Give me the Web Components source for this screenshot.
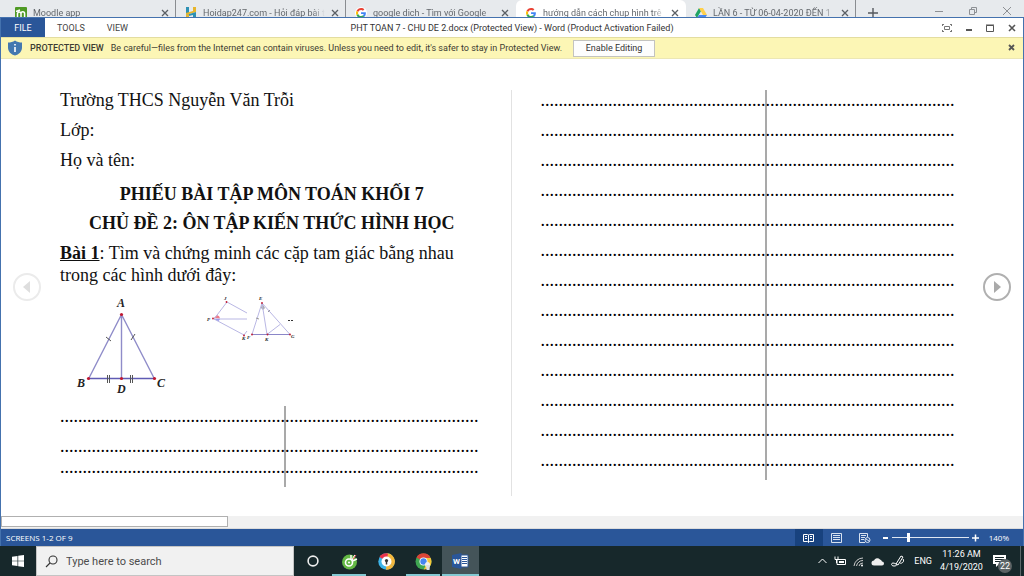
<!DOCTYPE html>
<html lang="en">
<head>
<meta charset="utf-8">
<title>PHT TOAN 7 - CHU DE 2.docx (Protected View) - Word</title>
<style>
  html, body { margin: 0; height: 100%; }
  body { font-family: Roboto, "Open Sans", sans-serif; font-size: 9px; color: #444; background: #fff; }
</style>
</head>
<body>
<desktop-screen></desktop-screen>

<script>
const define = (name, html) => {
  const template = document.createElement('template');
  template.innerHTML = html;
  customElements.define(name, class extends HTMLElement {
    constructor() {
      super();
      this.attachShadow({ mode: 'open' }).append(template.content.cloneNode(true));
    }
    connectedCallback() {
      const dots = this.shadowRoot.querySelectorAll('[data-dots]');
      dots.forEach(p => { p.textContent = '.'.repeat(Number(this.getAttribute('dots') || 92)); });
    }
  });
};

const button = 'button{font:inherit;color:inherit;background:none;border:0;padding:0;margin:0;display:flex;align-items:center;justify-content:center}svg{display:block}';
const cross = '<svg width="8" height="8" viewBox="0 0 8 8" stroke="currentColor" stroke-width="1.3"><path d="M1 1l6 6M7 1L1 7"/></svg>';
const google = '<svg slot="icon" width="12" height="12" viewBox="0 0 48 48"><circle cx="24" cy="24" r="24" fill="#fff"/><g transform="translate(4 4) scale(.84)"><path fill="#EA4335" d="M24 9.5c3.5 0 6.700 1.200 9.200 3.600l6.900-6.900C35.900 2.400 30.500 0 24 0 14.600 0 6.500 5.400 2.600 13.200l8 6.200C12.400 13.700 17.700 9.500 24 9.500z"/><path fill="#4285F4" d="M47 24.500c0-1.600-.2-3.100-.4-4.500H24v9h12.900c-.6 3-2.300 5.500-4.800 7.200l7.700 6C44.400 38 47 31.800 47 24.500z"/><path fill="#FBBC05" d="M10.500 28.600a14 14 0 0 1 0-9.200l-8-6.200a24 24 0 0 0 0 21.600z"/><path fill="#34A853" d="M24 48c6.500 0 11.900-2.100 15.900-5.800l-7.700-6c-2.200 1.500-4.900 2.300-8.200 2.300-6.300 0-11.600-4.200-13.500-9.900l-8 6.200C6.500 42.600 14.600 48 24 48z"/></g></svg>';

define('browser-tab', `
<style>
  :host { display: flex; flex: 0 1 170px; min-width: 0; box-sizing: border-box; height: 26px; align-items: center; gap: 6px; padding: 0 6px 0 9px; border-right: 1px solid #8a8d91; }
  :host([plain]) { border-color: transparent; }
  :host([active]) { background: #fff; border-color: transparent; border-radius: 6px 6px 0 0; }
  ${button}
  .label { flex: 1; min-width: 0; overflow: hidden; white-space: nowrap; font-size: 9px; line-height: 16px; color: #64686d;
    -webkit-mask-image: linear-gradient(90deg, #000 90%, transparent); mask-image: linear-gradient(90deg, #000 90%, transparent); }
  button { color: #5b5f64; }
</style>
<slot name="icon"></slot><span class="label"><slot></slot></span><button aria-label="Close tab">${cross}</button>`);

define('browser-strip', `
<style>
  :host { display: flex; height: 17px; overflow: hidden; background: #e7eaed; padding-left: 6px; align-items: flex-start; }
  ${button}
  .new { width: 34px; height: 26px; color: #55595e; flex: none; }
  .controls { margin-left: auto; display: flex; height: 22px; align-items: center; gap: 26px; padding-right: 13px; color: #8d9094; }
</style>
<browser-tab><svg slot="icon" width="12" height="12" viewBox="0 0 12 12"><rect width="12" height="12" rx="1" fill="#4f9a24"/><path d="M2.500 10V6.500a1.800 1.800 0 0 1 3.500 0V10M6 6.500a1.800 1.800 0 0 1 3.600 0V10M1 4.500L5 3" fill="none" stroke="#fff" stroke-width="1.500"/></svg>Moodle app</browser-tab>
<browser-tab><svg slot="icon" width="12" height="12" viewBox="0 0 12 12"><path d="M1 0h3v6H1z" fill="#2e91b4"/><path d="M8 0h3v5L1 8V6l7-2z" fill="#e7b52b"/><path d="M1 8l10-3v7H8V8L4 9v3H1z" fill="#2e91b4"/><path d="M1 8l3-1v5H1z" fill="#e7b52b"/></svg>Hoidap247.com - Hỏi đáp bài t</browser-tab>
<browser-tab plain>${google}google dịch - Tìm với Google</browser-tab>
<browser-tab active>${google}hướng dẫn cách chụp hình trê</browser-tab>
<browser-tab><svg slot="icon" width="12" height="12" viewBox="0 0 12 12"><path d="M4 1L0 8l2 3 4-7z" fill="#1fa463"/><path d="M4 1h4l4 7H8z" fill="#ffd04b"/><path d="M4 8h8l-2 3H2z" fill="#4688f4"/></svg>LẦN 6 - TỪ 06-04-2020 ĐẾN 1</browser-tab>
<button class="new" aria-label="New tab"><svg width="10" height="10" stroke="currentColor" stroke-width="1.400"><path d="M5 0v10M0 5h10"/></svg></button>
<div class="controls">
  <button aria-label="Minimize"><svg width="8" height="8" stroke="currentColor"><path d="M0 4.500h8"/></svg></button>
  <button aria-label="Restore"><svg width="8" height="8" fill="none" stroke="currentColor"><path d="M.5 2.500h5v5h-5zM2.500 2V.5h5v5H6"/></svg></button>
  <button aria-label="Close"><svg width="8" height="8" stroke="currentColor"><path d="M0 0l8 8M8 0L0 8"/></svg></button>
</div>`);

define('title-bar', `
<style>
  :host { display: grid; grid-template-columns: 1fr auto 1fr; height: 19px; align-items: center; background: #fff; }
  ${button}
  nav { display: flex; height: 19px; align-items: center; gap: 22px; }
  .file { width: 44px; height: 19px; background: #2a5699; color: #fff; margin-right: -10px; }
  h1 { margin: 0; font-size: 9px; font-weight: 400; line-height: 18px; white-space: nowrap; color: #333; }
  .controls { display: flex; justify-content: flex-end; gap: 13px; padding-right: 7px; color: #555; }
</style>
<nav><button class="file">FILE</button><button>TOOLS</button><button>VIEW</button></nav>
<h1>PHT TOAN 7 - CHU DE 2.docx (Protected View) - Word (Product Activation Failed)</h1>
<div class="controls">
  <button aria-label="Full screen"><svg width="10" height="8" fill="none" stroke="#777"><path d="M2.500 2.500h5v3h-5zM0 .5h2M8 .5h2M0 7.500h2M8 7.500h2M.5 0v2M9.500 0v2M.5 6v2M9.500 6v2"/></svg></button>
  <button aria-label="Minimize"><svg width="8" height="8" stroke="currentColor" stroke-width="2"><path d="M1 6h6"/></svg></button>
  <button aria-label="Maximize"><svg width="9" height="8" fill="none" stroke="currentColor"><path d="M.5 1.500h7v6h-7zM0 1h8"/></svg></button>
  <button aria-label="Close"><svg width="8" height="8" stroke="currentColor" stroke-width="1.600"><path d="M1 1l6 6M7 1L1 7"/></svg></button>
</div>`);

define('protected-bar', `
<style>
  :host { display: flex; height: 20px; align-items: center; background: #fcf6b5; border-top: 1px solid #e3dda0; border-bottom: 1px solid #ece7b4; padding: 0 7px 0 6px; white-space: nowrap; color: #3c3c32; }
  ${button}
  strong { font-weight: 500; margin: 0 7px; }
  .edit { width: 82px; height: 17px; margin-left: 11px; background: #fdfdfd; border: 1px solid #c3c3c0; box-sizing: border-box; color: #333; }
  .close { margin-left: auto; color: #555; }
</style>
<svg width="16" height="16" viewBox="0 0 16 16"><path d="M8 .5c2 1.500 4.500 2 7 2v5c0 4-3 7-7 8-4-1-7-4-7-8v-5c2.500 0 5-.5 7-2z" fill="#4478b0"/><path d="M8 4v1.500M8 7v5" stroke="#fff" stroke-width="1.600"/></svg>
<strong>PROTECTED VIEW</strong><span>Be careful—files from the Internet can contain viruses. Unless you need to edit, it's safer to stay in Protected View.</span>
<button class="edit">Enable Editing</button>
<button class="close" aria-label="Close message"><svg width="8" height="8" stroke="currentColor" stroke-width="1.800"><path d="M1 1l5 5M6 1L1 6"/></svg></button>`);

const dotted = `
  :host { display: block; position: relative; font-size: 18px; line-height: 20px; color: #000; }
  :host::after { content: ""; position: absolute; top: 0; bottom: 0; left: 54%; width: 2px; background: rgba(90,90,90,.52); }
  p { margin: 0; height: 30px; white-space: nowrap; }
  p.tight { height: 21px; }`;
define('answer-short', `<style>${dotted}</style><p data-dots></p><p data-dots class="tight"></p><p data-dots></p>`);
define('answer-long', `<style>${dotted}</style>${'<p data-dots></p>'.repeat(13)}`);

define('geometry-figures', `
<style>
  :host { display: block; }
  svg { display: block; }
  text { font-family: "Liberation Serif", serif; font-weight: 700; font-style: italic; fill: #222; }
</style>
<svg width="250" height="116" viewBox="0 0 250 116" role="img" aria-label="Triangles ABC, EFG and a partial figure">
  <g fill="none" stroke="#8f8cc9" stroke-width="1.400">
    <path d="M61.500 24.500L28.500 89M61.500 24.500L94.500 89M61.500 24.500V89"/>
    <path d="M28.500 88.500h66" stroke="#5f5bb4"/>
  </g>
  <path d="M46 47l5 4M71 50l4-6M47.500 85v8M49.500 85v8M70.500 85v8M72.500 85v8" stroke="#555" fill="none"/>
  <g fill="#c01830"><circle cx="61.500" cy="24.500" r="1.600"/><circle cx="28.500" cy="88.500" r="1.600"/><circle cx="61.500" cy="88.500" r="1.600"/><circle cx="94.500" cy="88.500" r="1.600"/></g>
  <g font-size="12"><text x="57" y="17">A</text><text x="17" y="97">B</text><text x="57" y="103">D</text><text x="97" y="97">C</text></g>
  <path d="M154 28l3-3a4 4 0 0 1 3 3.500z" fill="#f07a88"/><path d="M154 29h6a4 4 0 0 1-2 2z" fill="#7f7ff0"/>
  <path d="M201 18l1-5 3 5-2 2z" fill="#aaa"/>
  <g fill="none" stroke="#b9b7e4">
    <path d="M187 23l-20-11-13 17h33M154 29l30 16 3-4"/>
    <path d="M202 13l-10 31.500M202 13l5 31.500M202 13l28 31.500M207 44.500l13-10"/>
    <path d="M192 44.500h38" stroke="#8a86c8"/>
  </g>
  <path d="M196 28l3 1M208 22l2-2" stroke="#999"/>
  <g fill="#c01830"><circle cx="166.500" cy="12" r=".9"/><circle cx="153" cy="28.500" r=".9"/><circle cx="184" cy="45.500" r=".9"/><circle cx="202" cy="13" r=".9"/><circle cx="192" cy="44.500" r=".9"/><circle cx="207.500" cy="44.500" r=".9"/><circle cx="230" cy="44.500" r=".9"/></g>
  <g font-size="5"><text x="164" y="10">J</text><text x="147" y="31">P</text><text x="182" y="50">K</text><text x="199" y="10">E</text><text x="187" y="49">F</text><text x="205" y="51">K</text><text x="231" y="48">G</text></g>
  <path d="M228 30.500h5" stroke="#333" stroke-dasharray="2 1"/>
</svg>`);

define('reading-view', `
<style>
  :host { display: flex; flex: 1; min-height: 0; padding: 31px 12px 0; box-sizing: border-box; background: #fff; font-family: "Liberation Serif", serif; font-size: 18px; line-height: 22px; color: #111; }
  ${button}
  .turn { flex: none; width: 28px; height: 28px; align-self: center; box-sizing: border-box; border: 2px solid #b0b0b0; border-radius: 50%; color: #aaa; margin: 0 0 32px 18px; }
  .back { border-color: #ebebeb; color: #dedede; margin: 0 19px 32px 0; }
  article { flex: 1 1 0; box-sizing: border-box; min-width: 0; height: 406px; }
  .first { padding-right: 35px; border-right: 1px solid #e2e2e2; }
  .second { padding: 0 9px 0 29px; }
  p, h2 { margin: 0; font-size: inherit; }
  .line { height: 30px; line-height: 20px; }
  h2 { text-align: center; line-height: 29px; padding-left: 8px; }
  .task { padding: 4px 0; }
</style>
<button class="turn back" aria-label="Previous screen"><svg width="8" height="12" fill="currentColor"><path d="M7 0v12L0 6z"/></svg></button>
<article class="first">
  <p class="line">Trường THCS Nguyễn Văn Trỗi</p>
  <p class="line">Lớp:</p>
  <p class="line">Họ và tên:</p>
  <h2>PHIẾU BÀI TẬP MÔN TOÁN KHỐI 7</h2>
  <h2>CHỦ ĐỀ 2: ÔN TẬP KIẾN THỨC HÌNH HỌC</h2>
  <p class="task"><b><u>Bài 1</u></b>: Tìm và chứng minh các cặp tam giác bằng nhau <span>trong các hình dưới đây:</span></p>
  <geometry-figures></geometry-figures>
  <answer-short dots="93"></answer-short>
</article>
<article class="second"><answer-long dots="92"></answer-long></article>
<button class="turn" aria-label="Next screen"><svg width="8" height="12" fill="currentColor"><path d="M1 0v12l7-6z"/></svg></button>`);

define('status-bar', `
<style>
  :host { display: flex; height: 17px; align-items: center; background: #2a5699; color: #fff; padding: 0 14px 0 5px; font: 8px "Open Sans", sans-serif; }
  ${button}
  .views { margin-left: auto; display: flex; height: 17px; }
  .views button { width: 28px; height: 17px; }
  .views .on { background: #18427e; }
  .zoom { display: flex; align-items: center; gap: 3px; margin: 0 10px 0 4px; }
  input { -webkit-appearance: none; appearance: none; width: 77px; height: 9px; margin: 0; background: linear-gradient(#dfe7f2, #dfe7f2) center / 100% 1px no-repeat; }
  input::-webkit-slider-thumb { -webkit-appearance: none; width: 3px; height: 9px; background: #fff; }
</style>
<span>SCREENS 1-2 OF 9</span>
<div class="views">
  <button class="on" aria-label="Read mode"><svg width="11" height="10" fill="none" stroke="#fff"><path d="M5.500 1.500v8M.5 1.500h4l1 1 1-1h4v7h-4l-1 1-1-1h-4zM2 3.500h2M2 5.500h2M7 3.500h2M7 5.500h2"/></svg></button>
  <button aria-label="Print layout"><svg width="11" height="10" fill="none" stroke="#d8e2f0"><path d="M.5.500h10v9H.5zM2 2.500h7M2 4.500h7M2 6.500h7"/></svg></button>
  <button aria-label="Web layout"><svg width="12" height="10" fill="none" stroke="#d8e2f0"><path d="M6 9.500H.5v-9h8V4M2 2.500h5M2 4.500h4M2 6.500h3"/><circle cx="8.500" cy="7" r="2.500"/><path d="M7 6l3 2"/></svg></button>
</div>
<div class="zoom">
  <button aria-label="Zoom out"><svg width="6" height="8" stroke="#fff" stroke-width="2"><path d="M0 4h5"/></svg></button>
  <input type="range" min="0" max="100" value="21" aria-label="Zoom">
  <button aria-label="Zoom in"><svg width="7" height="8" stroke="#fff" stroke-width="1.500"><path d="M0 4h7M3.500.500v7"/></svg></button>
</div>
<span>140%</span>`);

define('word-window', `
<style>
  :host { display: flex; flex-direction: column; flex: 1; min-height: 0; border: solid #4472ae; border-width: 1px 1px 0; }
  .scroll { flex: none; height: 12px; background: #f1f1f1; border-bottom: 1px solid #dcdcdc; }
  .thumb { width: 22.2%; height: 11px; box-sizing: border-box; background: #fff; border: 1px solid #b0b0b0; }
</style>
<title-bar></title-bar><protected-bar></protected-bar><reading-view></reading-view>
<div class="scroll"><div class="thumb"></div></div>
<status-bar></status-bar>`);

define('task-button', `
<style>
  :host { display: block; width: 37px; height: 30px; }
  ${button}
  button { width: 100%; height: 30px; box-sizing: border-box; border-bottom: 2px solid transparent; padding-top: 2px; }
  :host([open]) button { border-image: linear-gradient(90deg, transparent 3px, #83c9d2 3px, #83c9d2 33px, transparent 33px) 2; }
  :host([current]) button { background: #445459; border-image: none; border-bottom-color: #83c9d2; }
</style>
<button><slot></slot></button>`);

define('task-bar', `
<style>
  :host { display: flex; height: 30px; align-items: center; background: #17282b; color: #fff; }
  ${button}
  .start { width: 36px; height: 30px; }
  .search { display: flex; align-items: center; gap: 8px; flex: 0 1 258px; box-sizing: border-box; height: 30px; background: #f1f1f1; border: 1px solid #c4c4c4; padding: 0 8px; color: #333; }
  input { flex: 1; min-width: 0; border: 0; padding: 0; background: none; font: 11px Roboto, sans-serif; color: #444; outline: 0; }
  input::placeholder { color: #4c4c4c; opacity: 1; }
  .tray { margin-left: auto; display: flex; align-items: center; gap: 7px; }
  .lang { margin-left: 2px; }
  time { display: block; text-align: center; line-height: 13px; width: 45px; }
  .notes { position: relative; box-sizing: border-box; justify-content: flex-start; width: 30px; height: 30px; border-right: 1px solid #5c686a; margin-right: 3px; padding-left: 2px; }
  .count { position: absolute; left: 7px; top: 13px; width: 14px; height: 14px; border-radius: 50%; background: #5b6365; line-height: 14px; text-align: center; }
</style>
<button class="start" aria-label="Start"><svg width="12" height="12" fill="#fff"><path d="M0 1.700l5.500-.8v4.800H0zM6.200.8L12 0v5.700H6.200zM0 6.300h5.500v4.800L0 10.300zM6.200 6.300H12V12l-5.800-.8z"/></svg></button>
<label class="search"><svg width="13" height="13" fill="none" stroke="#333" stroke-width="1.100"><circle cx="8" cy="5" r="4"/><path d="M5 8L1 12"/></svg><input type="search" placeholder="Type here to search" aria-label="Search"></label>
<task-button><svg width="12" height="12" fill="none" stroke="#eee" stroke-width="1.600"><circle cx="6" cy="6" r="4.900"/></svg></task-button>
<task-button open><svg width="17" height="17" viewBox="0 0 17 17"><circle cx="8.500" cy="9" r="7.500" fill="#63b844"/><circle cx="8" cy="9.500" r="3.500" fill="none" stroke="#fff" stroke-width="1.600"/><circle cx="8" cy="9.500" r="1" fill="#fff"/><path d="M10 6.500V2M11 7l3-5M11.500 8l4.500-2" stroke="#fff" stroke-width="1.400"/><path d="M12 6l3-4" stroke="#e55" /></svg></task-button>
<task-button><svg width="17" height="17" viewBox="0 0 17 17"><circle cx="8.500" cy="8.500" r="8.200" fill="#3db4e8"/><path d="M8.500 8.500V.300A8.200 8.200 0 0 1 15.500 13z" fill="#f4b73c"/><path d="M8.500 8.500L1.500 4A8.200 8.200 0 0 1 10 .5z" fill="#e8334a"/><path d="M8.500 8.500l7 4.500A8.200 8.200 0 0 1 8 16.700z" fill="#f4b73c"/><circle cx="8.500" cy="8.500" r="5" fill="#fff"/><circle cx="8.500" cy="7.600" r="1.600" fill="#333"/><path d="M8.500 8v3.500" stroke="#333" stroke-width="1.500"/></svg></task-button>
<task-button open><svg width="17" height="17" viewBox="0 0 17 17"><circle cx="8.500" cy="8.500" r="8" fill="#3fa652"/><path d="M8.500 8.500l-7-4A8 8 0 0 1 15.500 4.500z" fill="#dc4437"/><path d="M8.500 5h7.200a8 8 0 0 1-7 11.500L12 10z" fill="#f5c73a"/><circle cx="8.500" cy="8.500" r="4" fill="#fff"/><circle cx="8.500" cy="8.500" r="3.200" fill="#4485f0"/><circle cx="12.500" cy="11.500" r="2.500" fill="#eee"/><path d="M11 12h4l-.5 5h-3z" fill="#ddd"/></svg></task-button>
<task-button open current><svg width="17" height="16" viewBox="0 0 17 16"><path d="M8 2h8v12H8z" fill="#fff" stroke="#2a5699"/><path d="M10 4.500h5M10 6.500h5M10 8.500h5M10 10.500h5" stroke="#2a5699"/><path d="M0 2l9.500-2v16L0 14z" fill="#2a5699"/><text x="1" y="11" font-size="8" font-weight="700" fill="#fff">W</text></svg></task-button>
<div class="tray">
  <button aria-label="Show hidden icons"><svg width="9" height="6" fill="none" stroke="#fff"><path d="M.5 5l4-4 4 4"/></svg></button>
  <button aria-label="Battery"><svg width="12" height="10" fill="none" stroke="#fff"><path d="M3 3.500h8.500v5H3z"/><path d="M1 .5v3h3v-3M2.500 3v4" /><path d="M5 5h5v2H5z" fill="#fff" stroke="none"/></svg></button>
  <button aria-label="Network"><svg width="11" height="11" fill="none" stroke="#ccc"><path d="M1 10a9 9 0 0 1 9-8M3.500 10A6.500 6.500 0 0 1 10 4.500M6 10a4 4 0 0 1 4-3"/><circle cx="9" cy="9.500" r="1" fill="#fff" stroke="none"/></svg></button>
  <button aria-label="OneDrive"><svg width="13" height="9" fill="#eee"><path d="M3 8.500a2.500 2.500 0 0 1 0-5 3.500 3.500 0 0 1 6-1 3 3 0 0 1 2 2 2 2 0 0 1 0 4z"/></svg></button>
  <button aria-label="Pen"><svg width="14" height="13" fill="none" stroke="#fff"><path d="M5 9L10 1l2 1-5 8zM5 9c-5-3-6 2-2 2s3-3 2-2M12 4c2 3-2 5-3 4"/></svg></button>
  <span class="lang">ENG</span>
  <time datetime="2020-04-19T11:26">11:26 AM<br>4/19/2020</time>
  <button class="notes" aria-label="22 notifications"><svg width="13" height="12" viewBox="0 0 13 12"><path d="M0 0h13v9H6l-3 3V9H0z" fill="#fff"/><path d="M2 2.500h9M2 4.500h9M2 6.500h6" stroke="#17282b"/></svg><span class="count">22</span></button>
</div>`);

define('desktop-screen', `
<style>:host { display: flex; flex-direction: column; height: 100vh; min-height: 560px; overflow: hidden; }</style>
<browser-strip></browser-strip><word-window></word-window><task-bar></task-bar>`);
</script>
</body>
</html>
